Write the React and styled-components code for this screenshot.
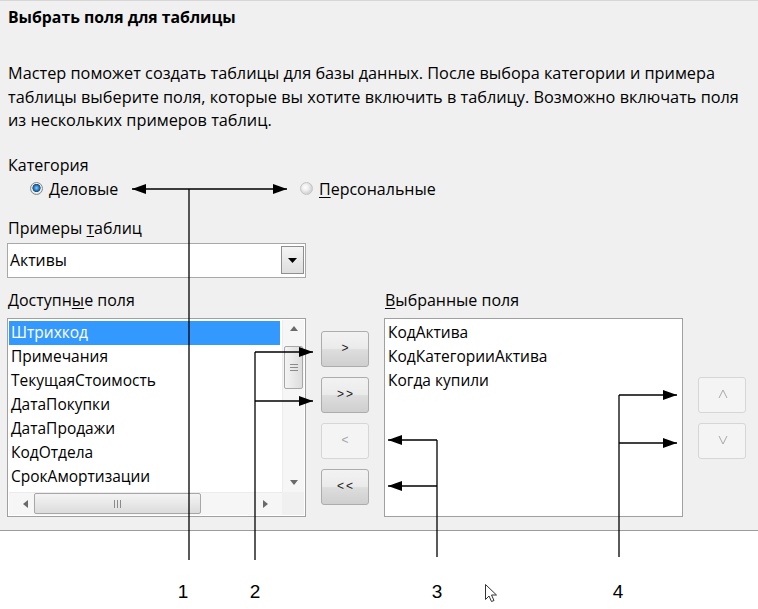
import React from "react";
import styled, { createGlobalStyle } from "styled-components";

const availableFields = [
  "Штрихкод",
  "Примечания",
  "ТекущаяСтоимость",
  "ДатаПокупки",
  "ДатаПродажи",
  "КодОтдела",
  "СрокАмортизации",
];

const selectedFields = ["КодАктива", "КодКатегорииАктива", "Когда купили"];

// annotation arrows drawn over the dialog
const leaders = [
  { x: 189, y1: 189, y2: 560, arrows: [{ y: 189, to: 132 }, { y: 189, to: 287 }] },
  { x: 255, y1: 352, y2: 560, arrows: [{ y: 352, to: 313 }, { y: 401, to: 313 }] },
  { x: 437, y1: 440, y2: 557, arrows: [{ y: 440, to: 388 }, { y: 486, to: 388 }] },
  { x: 619, y1: 395, y2: 557, arrows: [{ y: 395, to: 677 }, { y: 443, to: 677 }] },
];

const labels = [
  { n: "1", x: 183 },
  { n: "2", x: 255 },
  { n: "3", x: 437 },
  { n: "4", x: 618 },
];

const GlobalStyle = createGlobalStyle`
  html, body {
    margin: 0;
    padding: 0;
    background: #fff;
  }
  body {
    font-family: "Open Sans", "Noto Sans", sans-serif;
    color: #000;
  }
`;

const Page = styled.div`
  position: relative;
  width: 758px;
  height: 609px;
  overflow: hidden;
`;

const Dialog = styled.div`
  height: 531px;
  box-sizing: border-box;
  background: #f0f0f0;
  border-top: 1px solid #d6d6d6;
  border-bottom: 1px solid #9c9c9c;
  padding: 0 7px;
`;

const Title = styled.div`
  margin-top: 6px;
  font-size: 15.8px;
  font-weight: 700;
  line-height: 20px;
  padding-left: 1px;
`;

const Intro = styled.p`
  margin: 35px 0 0;
  font-size: 16.3px;
  line-height: 23.5px;
  padding-left: 1px;
  white-space: nowrap;
`;

const Label = styled.div`
  font-size: 16px;
  line-height: 20px;
  padding-left: 1px;
  margin-top: ${(p) => p.$top || 0}px;
`;

const RadioRow = styled.div`
  display: flex;
  align-items: center;
  height: 24px;
  margin-top: 2px;
  padding-left: 23px;
`;

const RadioOption = styled.label`
  display: flex;
  align-items: center;
  gap: 6px;
  font-size: 16px;
  width: ${(p) => p.$width || "auto"};
`;

const RadioDot = styled.span`
  width: 11px;
  height: 11px;
  border-radius: 50%;
  border: 1px solid ${(p) => (p.$checked ? "#8a8a8a" : "#c4c4c4")};
  background: ${(p) =>
    p.$checked
      ? "radial-gradient(circle at 50% 45%, #8ccdf5 0, #2a7cc0 2.4px, #154d80 3.8px, #f4f4f4 4.4px, #dcdcdc 6px)"
      : "radial-gradient(circle at 40% 40%, #ffffff 0, #f0f0f0 3px, #d6d6d6 6px)"};
`;

const Combo = styled.div`
  margin-top: 5px;
  width: 299px;
  height: 35px;
  box-sizing: border-box;
  border: 1px solid #a8a8a8;
  background: #fff;
  display: flex;
  align-items: center;
  justify-content: space-between;
  padding: 0 1px 0 2px;
  font-size: 15.8px;
`;

const ComboButton = styled.div`
  width: 23px;
  height: 28px;
  box-sizing: border-box;
  border: 1px solid #8f8f8f;
  background: linear-gradient(#f4f4f4, #dedede);
  display: flex;
  align-items: center;
  justify-content: center;
`;

const Fields = styled.div`
  margin-top: 12px;
  display: grid;
  grid-template-columns: 299px 48px 299px 48px;
  grid-template-rows: 20px 199px;
  column-gap: 15px;
  row-gap: 8px;
`;

const ListBox = styled.div`
  box-sizing: border-box;
  border: 1px solid #a0a0a0;
  background: #fff;
  padding: 1px;
  display: grid;
  grid-template-columns: ${(p) => (p.$scroll ? "1fr 22px" : "1fr")};
  grid-template-rows: ${(p) => (p.$scroll ? "1fr 23px" : "1fr")};
`;

const Items = styled.div`
  padding-top: 1px;
  overflow: hidden;
`;

const Item = styled.div`
  height: 24px;
  line-height: 23px;
  font-size: 15.5px;
  padding-left: 2px;
  margin-right: 2px;
  white-space: nowrap;
  background: ${(p) => (p.$selected ? "#3399ff" : "transparent")};
  color: ${(p) => (p.$selected ? "#fff" : "#000")};
`;

const VScroll = styled.div`
  background: #f6f6f6;
  border-left: 1px solid #ececec;
  display: flex;
  flex-direction: column;
  align-items: center;
`;

const HScroll = styled.div`
  background: #f6f6f6;
  border-top: 1px solid #ececec;
  display: flex;
  align-items: center;
  padding: 0 8px 0 8px;
`;

const Corner = styled.div`
  background: #f0f0f0;
`;

const ArrowCell = styled.div`
  width: ${(p) => (p.$h ? "17px" : "22px")};
  height: ${(p) => (p.$h ? "22px" : "18px")};
  display: flex;
  align-items: center;
  justify-content: center;
  flex-shrink: 0;
`;

const Thumb = styled.div`
  box-sizing: border-box;
  border: 1px solid #a7a7a7;
  border-radius: 2px;
  background: ${(p) =>
    p.$h ? "linear-gradient(#f4f4f4, #dcdcdc)" : "linear-gradient(90deg, #f4f4f4, #dcdcdc)"};
  display: flex;
  align-items: center;
  justify-content: center;
  ${(p) => (p.$h ? "width: 167px; height: 21px;" : "width: 19px; height: 43px; margin-top: 8px;")}
`;

const Grip = styled.div`
  display: flex;
  flex-direction: ${(p) => (p.$h ? "row" : "column")};
  gap: 2px;
  & > span {
    display: block;
    background: #8a8a8a;
    ${(p) => (p.$h ? "width: 1px; height: 8px;" : "width: 8px; height: 1px;")}
  }
`;

const ButtonColumn = styled.div`
  display: flex;
  flex-direction: column;
  gap: 10px;
  padding-top: ${(p) => p.$top}px;
`;

const Button = styled.button`
  width: 48px;
  height: 36px;
  box-sizing: border-box;
  border-radius: 3px;
  font-family: "Liberation Sans", sans-serif;
  font-size: 12px;
  letter-spacing: 2px;
  padding: 0 0 2px 2px;
  display: flex;
  align-items: center;
  justify-content: center;
  border: 1px solid ${(p) => (p.disabled ? "#d6d6d6" : "#acacac")};
  color: ${(p) => (p.disabled ? "#a6a6a6" : "#222")};
  background: ${(p) =>
    p.disabled
      ? "#f4f4f4"
      : "linear-gradient(#f2f2f2 0, #ebebeb 48%, #dddddd 52%, #cfcfcf 100%)"};
`;

const Overlay = styled.svg`
  position: absolute;
  top: 0;
  left: 0;
  pointer-events: none;
`;

const Tri = ({ dir }) => {
  const paths = {
    up: "M0 5 L4 0 L8 5 Z",
    down: "M0 0 L8 0 L4 5 Z",
    left: "M5 0 L5 8 L0 4 Z",
    right: "M0 0 L5 4 L0 8 Z",
  };
  const horiz = dir === "left" || dir === "right";
  return (
    <svg width={horiz ? 5 : 8} height={horiz ? 8 : 5}>
      <path d={paths[dir]} fill="#6a6a6a" />
    </svg>
  );
};

const Chevron = ({ up }) => (
  <svg width="10" height="10" viewBox="0 0 10 10">
    <polyline
      points={up ? "1,9 5,1 9,9" : "1,1 5,9 9,1"}
      fill="none"
      stroke="#a8a8a8"
      strokeWidth="1"
    />
  </svg>
);

const Mnemonic = styled.u`
  text-decoration-thickness: 1px;
  text-underline-offset: 2px;
`;

function Arrowhead({ x, y, from }) {
  const dir = x > from ? 1 : -1;
  const base = x - dir * 14;
  return <polygon points={`${x},${y} ${base},${y - 5} ${base},${y + 5}`} fill="#000" />;
}

export default function App() {
  return (
    <Page>
      <GlobalStyle />
      <Dialog>
        <Title>Выбрать поля для таблицы</Title>
        <Intro>
          Мастер поможет создать таблицы для базы данных. После выбора категории и примера
          <br />
          таблицы выберите поля, которые вы хотите включить в таблицу. Возможно включать поля
          <br />
          из нескольких примеров таблиц.
        </Intro>

        <Label $top={22}>Категория</Label>
        <RadioRow>
          <RadioOption $width="270px">
            <RadioDot $checked />
            <span>
              <Mnemonic>Д</Mnemonic>еловые
            </span>
          </RadioOption>
          <RadioOption>
            <RadioDot />
            <span>
              <Mnemonic>П</Mnemonic>ерсональные
            </span>
          </RadioOption>
        </RadioRow>

        <Label $top={17}>
          Примеры <Mnemonic>т</Mnemonic>аблиц
        </Label>
        <Combo>
          <span>Активы</span>
          <ComboButton>
            <svg width="9" height="5">
              <path d="M0 0 L9 0 L4.5 5 Z" fill="#000" />
            </svg>
          </ComboButton>
        </Combo>

        <Fields>
          <Label>
            Доступн<Mnemonic>ы</Mnemonic>е поля
          </Label>
          <div />
          <Label>
            <Mnemonic>В</Mnemonic>ыбранные поля
          </Label>
          <div />

          <ListBox $scroll>
            <Items>
              {availableFields.map((f, i) => (
                <Item key={f} $selected={i === 0}>
                  {f}
                </Item>
              ))}
            </Items>
            <VScroll>
              <ArrowCell>
                <Tri dir="up" />
              </ArrowCell>
              <Thumb>
                <Grip>
                  <span />
                  <span />
                  <span />
                </Grip>
              </Thumb>
              <div style={{ flex: 1 }} />
              <ArrowCell>
                <Tri dir="down" />
              </ArrowCell>
            </VScroll>
            <HScroll>
              <ArrowCell $h>
                <Tri dir="left" />
              </ArrowCell>
              <Thumb $h>
                <Grip $h>
                  <span />
                  <span />
                  <span />
                </Grip>
              </Thumb>
              <div style={{ flex: 1 }} />
              <ArrowCell $h>
                <Tri dir="right" />
              </ArrowCell>
            </HScroll>
            <Corner />
          </ListBox>

          <ButtonColumn $top={13}>
            <Button>&gt;</Button>
            <Button>&gt;&gt;</Button>
            <Button disabled>&lt;</Button>
            <Button>&lt;&lt;</Button>
          </ButtonColumn>

          <ListBox>
            <Items>
              {selectedFields.map((f) => (
                <Item key={f}>{f}</Item>
              ))}
            </Items>
          </ListBox>

          <ButtonColumn $top={59}>
            <Button disabled aria-label="Вверх">
              <Chevron up />
            </Button>
            <Button disabled aria-label="Вниз">
              <Chevron />
            </Button>
          </ButtonColumn>
        </Fields>
      </Dialog>

      <Overlay width="758" height="609">
        {leaders.map((l) => (
          <g key={l.x}>
            <line x1={l.x} y1={l.y1} x2={l.x} y2={l.y2} stroke="#000" strokeWidth="1.3" />
            {l.arrows.map((a, i) => (
              <g key={i}>
                <line x1={l.x} y1={a.y} x2={a.to} y2={a.y} stroke="#000" strokeWidth="1.3" />
                <Arrowhead x={a.to} y={a.y} from={l.x} />
              </g>
            ))}
          </g>
        ))}
        {labels.map((t) => (
          <text
            key={t.n}
            x={t.x}
            y={598}
            textAnchor="middle"
            fontFamily="Liberation Sans, sans-serif"
            fontSize="19"
            fill="#000"
          >
            {t.n}
          </text>
        ))}
        <path
          d="M485.5 584.5 L485.5 599.5 L489 596 L491.5 601.5 L494 600.5 L491.5 595 L496.5 595 Z"
          fill="#fff"
          stroke="#333"
          strokeWidth="1"
        />
      </Overlay>
    </Page>
  );
}
